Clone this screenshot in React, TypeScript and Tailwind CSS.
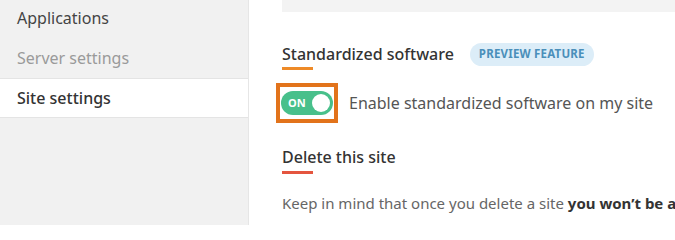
export default function App() {
  const font = { fontFamily: '"Noto Sans", "Open Sans", sans-serif' };
  return (
    <div className="w-[675px] h-[225px] overflow-hidden flex bg-white" style={font}>
      <aside className="w-[249px] shrink-0 h-full bg-[#f1f1f1] border-r border-[#e6e6e6] flex flex-col">
        <div className="h-[40px] mt-[-2px] flex items-center pl-[17px] text-[16px] text-[#444]">Applications</div>
        <div className="h-[40px] flex items-center pl-[17px] text-[16px] text-[#9a9a9a]">Server settings</div>
        <div className="h-[40px] flex items-center pl-[17px] text-[16px] text-[#333] bg-white border-y border-[#e4e4e4] font-medium">Site settings</div>
      </aside>
      <main className="flex-1 pl-[33px] flex flex-col min-w-0">
        <div className="h-[12px] bg-[#f3f3f3] shrink-0" />
        <div className="mt-[30px] flex items-center gap-[16px] h-[24px]">
          <div className="text-[16px] font-medium text-[#333] whitespace-nowrap">Standardized software</div>
          <span className="rounded-full bg-[#dcedf8] text-[#4a8fba] text-[11.5px] font-bold px-[9px] h-[23px] flex items-center tracking-[0.2px] whitespace-nowrap">PREVIEW FEATURE</span>
        </div>
        <div className="w-[31px] h-[3px] bg-[#ee8a28] mt-[1px]" />
        <div className="mt-[13px] flex items-center gap-[11px]">
          <div className="ml-[-6px] w-[62px] h-[40px] shrink-0 border-[4px] border-[#e2731b] flex items-center justify-center">
            <div className="w-[52px] h-[24px] rounded-full bg-[#48c08b] flex items-center justify-between pl-[7px] pr-[3px]">
              <span className="text-[11px] font-bold text-white">ON</span>
              <span className="w-[18px] h-[18px] rounded-full bg-white" />
            </div>
          </div>
          <div className="text-[16px] text-[#555] whitespace-nowrap">Enable standardized software on my site</div>
        </div>
        <div className="mt-[23px] text-[16px] font-medium text-[#333] h-[22px] flex items-center">Delete this site</div>
        <div className="w-[31px] h-[3px] bg-[#e4553f] mt-[3px]" />
        <div className="mt-[18px] text-[15px] text-[#666] whitespace-nowrap overflow-hidden">
          Keep in mind that once you delete a site <span className="font-bold text-[#333]">you won’t be al</span>
        </div>
      </main>
    </div>
  );
}
